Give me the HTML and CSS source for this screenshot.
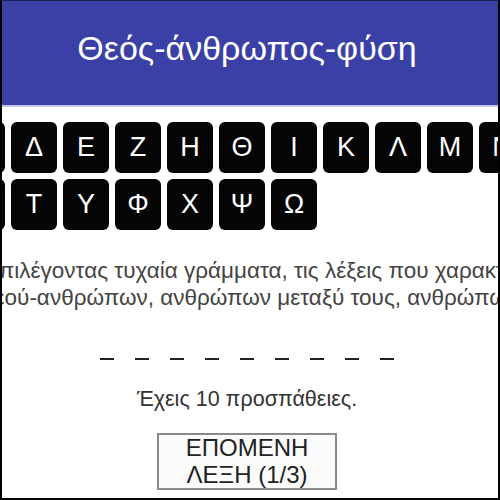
FILE: index.html
```html
<!DOCTYPE html>
<html lang="el">
<head>
<meta charset="utf-8">
<title>Θεός-άνθρωπος-φύση</title>
<link rel="stylesheet" href="styles.css">
</head>
<body>
<div class="frame">
  <header class="header">
    <h1 class="title">Θεός-άνθρωπος-φύση</h1>
  </header>
  <div class="keys">
    <button class="key">Α</button><button class="key">Β</button><button class="key">Γ</button><button class="key">Δ</button><button class="key">Ε</button><button class="key">Ζ</button><button class="key">Η</button><button class="key">Θ</button><button class="key">Ι</button><button class="key">Κ</button><button class="key">Λ</button><button class="key">Μ</button><button class="key">Ν</button><button class="key">Ξ</button><button class="key">Ο</button><button class="key">Π</button><button class="key">Ρ</button><button class="key">Σ</button><button class="key">Τ</button><button class="key">Υ</button><button class="key">Φ</button><button class="key">Χ</button><button class="key">Ψ</button><button class="key">Ω</button>
  </div>
  <p class="intro">Μαντέψτε, επιλέγοντας τυχαία γράμματα, τις λέξεις που χαρακτηρίζουν τις<br>σχέσεις θεού-ανθρώπων, ανθρώπων μεταξύ τους, ανθρώπων-φύσης</p>
  <div class="word">
    <span class="dash"></span><span class="dash"></span><span class="dash"></span><span class="dash"></span><span class="dash"></span><span class="dash"></span><span class="dash"></span><span class="dash"></span><span class="dash"></span>
  </div>
  <p class="tries">Έχεις 10 προσπάθειες.</p>
  <button class="next">ΕΠΟΜΕΝΗ<br>ΛΕΞΗ (1/3)</button>
</div>
</body>
</html>
```
FILE: styles.css
```css
html, body {
  margin: 0;
  padding: 0;
  background: #ffffff;
}

.frame {
  width: 500px;
  height: 500px;
  box-sizing: border-box;
  border: 2px solid #000000;
  border-top: 1px solid #1c1f5a;
  overflow: hidden;
  display: flex;
  flex-direction: column;
  align-items: center;
  font-family: "Liberation Sans", Arial, sans-serif;
}

.header {
  align-self: stretch;
  height: 104px;
  flex-shrink: 0;
  background: #3b40a6;
  border-bottom: 2px solid #c6c9ea;
  display: flex;
  align-items: center;
  justify-content: center;
}

.title {
  margin: 0 6px 10px 0;
  color: #ffffff;
  font-weight: normal;
  font-size: 34px;
}

.keys {
  flex-shrink: 0;
  width: 790px;
  margin-top: 15px;
  display: flex;
  flex-wrap: wrap;
  gap: 6px;
}

.key {
  width: 46px;
  height: 51px;
  padding: 0;
  border: none;
  border-radius: 6px;
  background: #050505;
  color: #ffffff;
  font-family: "Liberation Sans", Arial, sans-serif;
  font-size: 27px;
  display: flex;
  align-items: center;
  justify-content: center;
}

.intro {
  flex-shrink: 0;
  width: 790px;
  margin: 27px 0 0 0;
  padding-right: 10px;
  text-align: center;
  white-space: nowrap;
  color: #444444;
  font-size: 22.5px;
  line-height: 27px;
}

.word {
  margin-top: 47px;
  margin-right: 6px;
  display: flex;
  gap: 21px;
}

.dash {
  width: 14px;
  height: 2px;
  background: #222222;
}

.tries {
  margin: 27px 6px 0 0;
  color: #333333;
  font-size: 21.5px;
}

.next {
  margin-top: 21px;
  margin-right: 6px;
  width: 180px;
  padding: 0;
  border: 2px solid #8a8a8a;
  background: #fbfbfb;
  color: #222222;
  font-family: "Liberation Sans", Arial, sans-serif;
  font-size: 24px;
  line-height: 26.5px;
}
```
